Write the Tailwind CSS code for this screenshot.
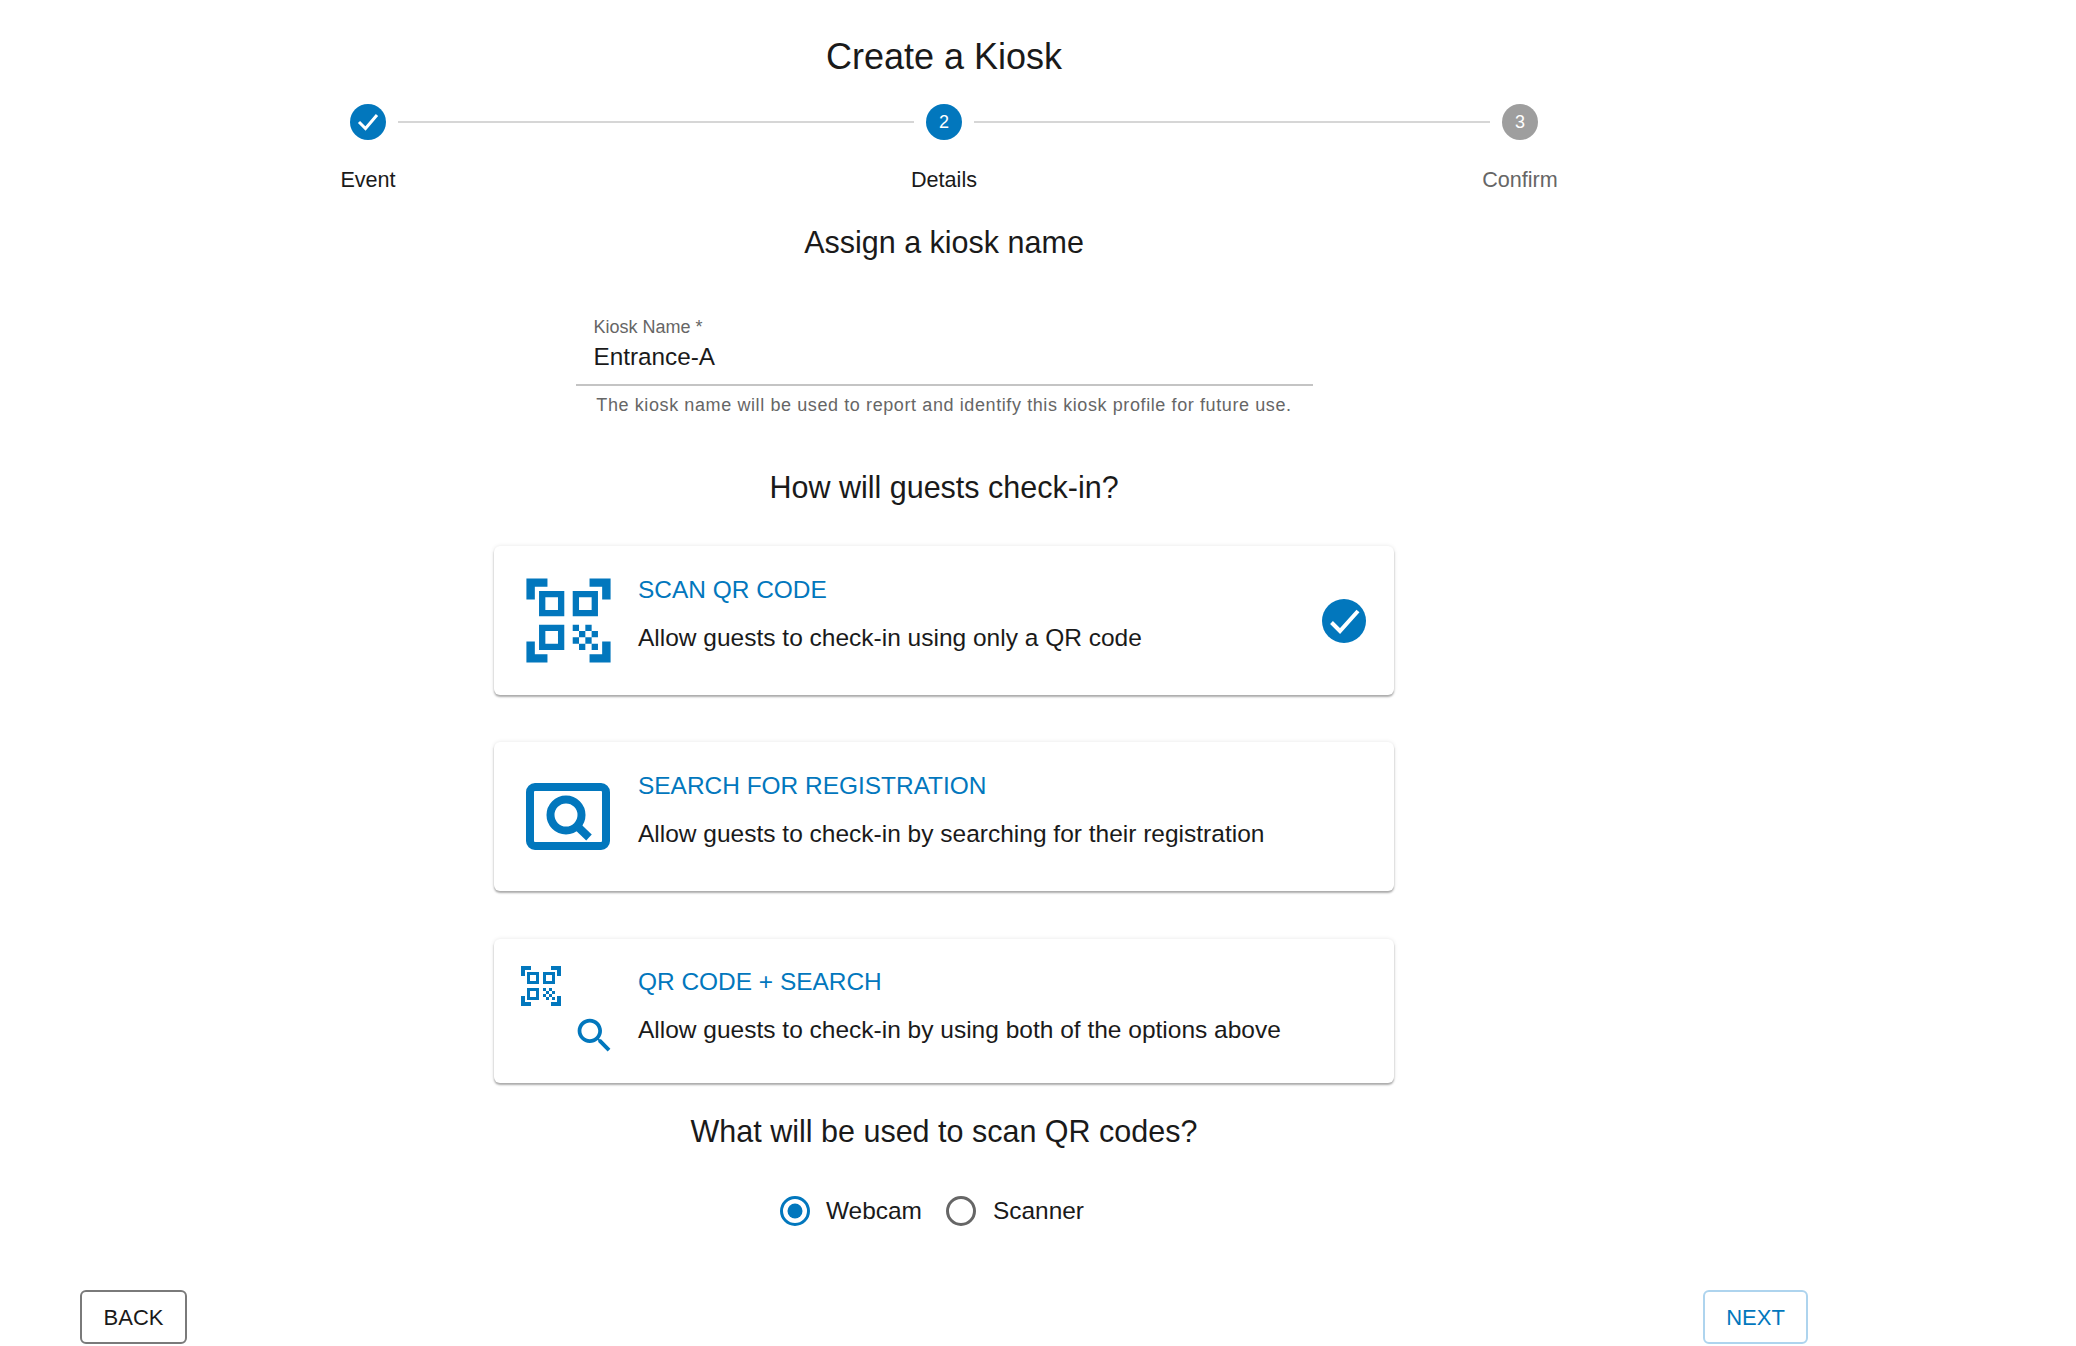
<!DOCTYPE html>
<html lang="en">
<head>
<meta charset="utf-8">
<title>Create a Kiosk</title>
<script src="https://cdn.jsdelivr.net/npm/@tailwindcss/browser@4"></script>
</head>
<body class="bg-white">
<div class="w-[2076px] h-[1346px] overflow-hidden font-['Liberation_Sans',Arial,sans-serif] text-[#1a1a1a]">
  <main class="w-[1888px] flex flex-col items-center">
    <h1 class="mt-[33px] text-[36px] leading-[48px] font-normal">Create a Kiosk</h1>

    <div class="mt-[23px] w-[1312px] flex items-start">
      <div class="w-[160px] flex flex-col items-center">
        <svg class="w-[36px] h-[36px]" viewBox="0 0 36 36" fill="none"><circle cx="18" cy="18" r="18" fill="#0277bd"/><path d="M9 18l6.500 6.500L27 11" stroke="#fff" stroke-width="3"/></svg>
        <div class="mt-[28px] text-[21.6px] leading-[24px]">Event</div>
      </div>
      <div class="flex-1 h-[2px] mt-[17px] -mx-[50px] bg-[#d6d6d6]"></div>
      <div class="w-[160px] flex flex-col items-center">
        <div class="w-[36px] h-[36px] rounded-full bg-[#0277bd] flex items-center justify-center text-white text-[18px]">2</div>
        <div class="mt-[28px] text-[21.6px] leading-[24px]">Details</div>
      </div>
      <div class="flex-1 h-[2px] mt-[17px] -mx-[50px] bg-[#d6d6d6]"></div>
      <div class="w-[160px] flex flex-col items-center">
        <div class="w-[36px] h-[36px] rounded-full bg-[#9e9e9e] flex items-center justify-center text-white text-[18px]">3</div>
        <div class="mt-[28px] text-[21.6px] leading-[24px] text-[#666]">Confirm</div>
      </div>
    </div>

    <h2 class="mt-[30px] text-[30.500px] leading-[40px] font-normal">Assign a kiosk name</h2>

    <div class="mt-[53px] w-[737px]">
      <div class="pl-[18px] text-[18px] leading-[24px] text-[#666]">Kiosk Name *</div>
      <div class="pl-[18px] pb-[9px] text-[24.300px] leading-[36px] border-b-2 border-[#c4c4c4]">Entrance-A</div>
      <div class="mt-[7px] text-center text-[18px] leading-[24px] tracking-[0.6px] text-[#666]">The kiosk name will be used to report and identify this kiosk profile for future use.</div>
    </div>

    <h2 class="mt-[50px] text-[30.500px] leading-[40px] font-normal">How will guests check-in?</h2>

    <section class="mt-[39px] w-[900px] h-[149px] rounded-[6px] bg-white shadow-[0_2px_2px_rgba(0,0,0,0.3),0_0_4px_rgba(0,0,0,0.1)] px-[24px] flex items-center">
      <svg class="w-[101px] h-[101px] shrink-0" viewBox="0 0 24 24" fill="#0277bd"><path d="M9.5 6.5v3h-3v-3h3M11 5H5v6h6V5zm-1.5 9.5v3h-3v-3h3M11 13H5v6h6v-6zm6.5-6.5v3h-3v-3h3M19 5h-6v6h6V5zm-6 8h1.5v1.5H13V13zm1.5 1.5H16V16h-1.5v-1.5zM16 13h1.5v1.5H16V13zm-3 3h1.5v1.5H13V16zm1.5 1.5H16V19h-1.5v-1.5zM16 16h1.5v1.5H16V16zm1.5-1.5H19V16h-1.5v-1.5zm0 3H19V19h-1.5v-1.5zM22 7h-2V4h-3V2h5v5zm0 15v-5h-2v3h-3v2h5zM2 22h5v-2H4v-3H2v5zM2 2v5h2V4h3V2H2z"/></svg>
      <div class="ml-[19px] flex-1 pb-[13px]">
        <div class="text-[24.450px] leading-[32px] text-[#0277bd]">SCAN QR CODE</div>
        <div class="mt-[16px] text-[24.500px] leading-[32px]">Allow guests to check-in using only a QR code</div>
      </div>
      <svg class="w-[44px] h-[44px] shrink-0 mr-[4px]" viewBox="0 0 44 44"><circle cx="22" cy="22" r="22" fill="#0277bd"/><path d="M9.5 23.5l8.5 8.5 18-20" fill="none" stroke="#fff" stroke-width="4"/></svg>
    </section>

    <section class="mt-[47px] w-[900px] h-[149px] rounded-[6px] bg-white shadow-[0_2px_2px_rgba(0,0,0,0.3),0_0_4px_rgba(0,0,0,0.1)] pl-[32px] pr-[24px] flex items-center">
      <svg class="w-[84px] h-[67px] shrink-0" viewBox="0 0 84 67" fill="none" stroke="#0277bd"><rect x="4" y="4" width="76" height="59" rx="5" stroke-width="8"/><circle cx="40" cy="32" r="15.5" stroke-width="8"/><path d="M51 43l12 11.500" stroke-width="8"/></svg>
      <div class="ml-[28px] flex-1 pb-[13px]">
        <div class="text-[24.450px] leading-[32px] text-[#0277bd]">SEARCH FOR REGISTRATION</div>
        <div class="mt-[16px] text-[24.500px] leading-[32px]">Allow guests to check-in by searching for their registration</div>
      </div>
    </section>

    <section class="mt-[48px] w-[900px] h-[144px] rounded-[6px] bg-white shadow-[0_2px_2px_rgba(0,0,0,0.3),0_0_4px_rgba(0,0,0,0.1)] pl-[23px] pr-[24px] flex items-center">
      <div class="w-[101px] h-[96px] mb-[2px] shrink-0 flex flex-col justify-between">
        <svg class="w-[48px] h-[48px]" viewBox="0 0 24 24" fill="#0277bd"><path d="M9.5 6.5v3h-3v-3h3M11 5H5v6h6V5zm-1.5 9.500v3h-3v-3h3M11 13H5v6h6v-6zm6.5-6.5v3h-3v-3h3M19 5h-6v6h6V5zm-6 8h1.5v1.5H13V13zm1.5 1.5H16V16h-1.5v-1.5zM16 13h1.5v1.5H16V13zm-3 3h1.5v1.5H13V16zm1.5 1.5H16V19h-1.5v-1.5zM16 16h1.5v1.5H16V16zm1.5-1.5H19V16h-1.5v-1.5zm0 3H19V19h-1.5v-1.5zM22 7h-2V4h-3V2h5v5zm0 15v-5h-2v3h-3v2h5zM2 22h5v-2H4v-3H2v5zM2 2v5h2V4h3V2H2z"/></svg>
        <svg class="w-[45px] h-[45px] self-end mr-[1px]" viewBox="0 0 24 24" fill="#0277bd"><path d="M15.500 14h-.79l-.28-.27C15.410 12.590 16 11.110 16 9.500 16 5.910 13.090 3 9.500 3S3 5.910 3 9.500 5.910 16 9.500 16c1.610 0 3.090-.59 4.230-1.570l.27.28v.79l5 4.990L20.490 19l-4.990-5zm-6 0C7.010 14 5 11.990 5 9.500S7.010 5 9.500 5 14 7.010 14 9.500 11.990 14 9.500 14z"/></svg>
      </div>
      <div class="ml-[20px] flex-1 pb-[10px]">
        <div class="text-[24.450px] leading-[32px] text-[#0277bd]">QR CODE + SEARCH</div>
        <div class="mt-[16px] text-[24.500px] leading-[32px]">Allow guests to check-in by using both of the options above</div>
      </div>
    </section>

    <h2 class="mt-[28px] text-[30.500px] leading-[40px] font-normal">What will be used to scan QR codes?</h2>

    <div class="mt-[44px] flex items-center text-[24.450px] leading-[32px]">
      <svg class="w-[30px] h-[30px]" viewBox="0 0 30 30"><circle cx="15" cy="15" r="13.500" fill="none" stroke="#0277bd" stroke-width="3"/><circle cx="15" cy="15" r="7.500" fill="#0277bd"/></svg>
      <span class="ml-[16px]">Webcam</span>
      <svg class="ml-[24px] w-[30px] h-[30px]" viewBox="0 0 30 30"><circle cx="15" cy="15" r="13.500" fill="none" stroke="#666" stroke-width="3"/></svg>
      <span class="ml-[17px] mr-[24px]">Scanner</span>
    </div>

    <div class="mt-[63px] w-full px-[80px] flex justify-between">
      <button class="w-[107px] h-[54px] rounded-[6px] border-2 border-[#7a7a7a] text-[22px]">BACK</button>
      <button class="w-[105px] h-[54px] rounded-[6px] border-2 border-[#aed4ee] text-[22px] text-[#0277bd]">NEXT</button>
    </div>
  </main>
</div>
</body>
</html>
